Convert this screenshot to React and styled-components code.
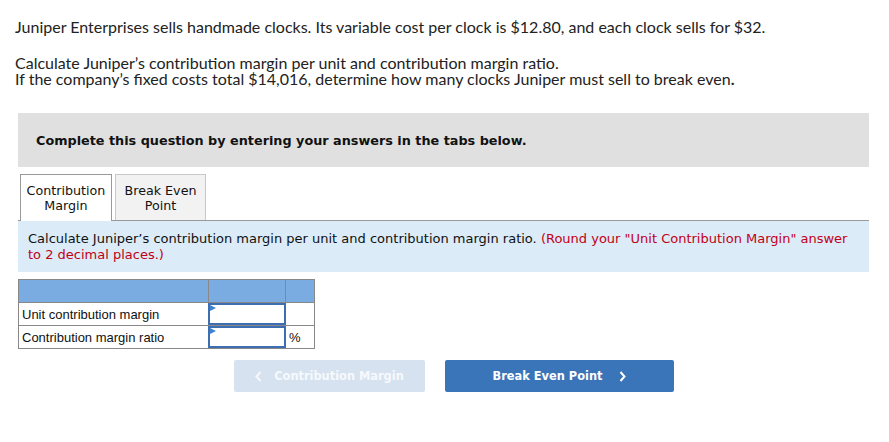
import styled, { createGlobalStyle } from 'styled-components';

const Global = createGlobalStyle`
  body {
    margin: 0;
    background: #ffffff;
    font-family: "Open Sans", "Liberation Sans", sans-serif;
    color: #222;
  }
`;

const Page = styled.div`
  padding: 19px 20px 40px 18px;
  width: 851px;
`;

const Para = styled.p`
  margin: 0 0 0 -3px;
  font-family: "Lato", "Open Sans", sans-serif;
  font-size: 16px;
  line-height: 16px;
  color: #222;
  & + & {
    margin-top: 20px;
  }
`;

const Banner = styled.div`
  margin-top: 26px;
  height: 54px;
  display: flex;
  align-items: center;
  padding-left: 18px;
  background: #e0e0e0;
  font-family: "DejaVu Sans", Verdana, sans-serif;
  font-size: 12.8px;
  font-weight: bold;
  color: #111;
`;

const TabBar = styled.div`
  display: flex;
  gap: 3px;
  margin-top: 7px;
  padding-left: 2px;
  border-bottom: 1px solid #999;
`;

const Tab = styled.div`
  width: ${p => (p.$active ? 92 : 91)}px;
  height: ${p => (p.$active ? 47 : 46)}px;
  box-sizing: border-box;
  border: 1px solid ${p => (p.$active ? '#999' : '#c8c8c8')};
  border-bottom: none;
  background: ${p => (p.$active ? '#ffffff' : '#f2f2f2')};
  margin-bottom: ${p => (p.$active ? '-1px' : '0')};
  display: flex;
  align-items: center;
  justify-content: center;
  text-align: center;
  font-family: "DejaVu Sans", Verdana, sans-serif;
  font-size: 12.7px;
  line-height: 15px;
  color: #111;
`;

const Info = styled.div`
  background: #dbebf8;
  padding: 10px 10px 9px 10px;
  height: 51px;
  box-sizing: border-box;
  font-family: "DejaVu Sans", Verdana, sans-serif;
  font-size: 13px;
  line-height: 16px;
  color: #111;
`;

const Note = styled.span`
  color: #c20016;
`;

const Grid = styled.table`
  margin-top: 7px;
  border-collapse: collapse;
  font-family: "Liberation Sans", Arial, sans-serif;
  font-size: 13px;
  color: #111;
  td {
    border: 1px solid #888;
    padding: 0;
    height: 22px;
  }
`;

const HeadCell = styled.td`
  background: #7aace2;
  width: ${p => p.$w}px;
`;

const Label = styled.td`
  padding-left: 3px !important;
`;

const Entry = styled.td`
  position: relative;
`;

const Field = styled.div`
  height: 22px;
  box-sizing: border-box;
  border: 2px solid #3d6eb2;
  margin: 0 -1px;
  position: relative;
  &::before {
    content: '';
    position: absolute;
    top: 0;
    left: 0;
    border-left: 6px solid #3d82d0;
    border-top: 3px solid transparent;
    border-bottom: 3px solid transparent;
  }
`;

const Unit = styled.td`
  padding-left: 3px !important;
`;

const Nav = styled.div`
  display: flex;
  gap: 20px;
  margin: 11px 0 0 216px;
`;

const NavButton = styled.button`
  width: ${p => p.$w}px;
  height: 32px;
  border: none;
  border-radius: 2px;
  background: ${p => (p.$disabled ? '#d6e2f0' : '#3a75b9')};
  color: ${p => (p.$disabled ? '#f6f9fc' : '#ffffff')};
  font-family: "DejaVu Sans", Verdana, sans-serif;
  font-size: 11.4px;
  font-weight: bold;
  display: flex;
  align-items: center;
  justify-content: center;
  gap: ${p => (p.$disabled ? 12 : 17)}px;
  padding: 0;
`;

const Chevron = ({ dir }) => (
  <svg width="7" height="11" viewBox="0 0 7 11">
    <path
      d={dir === 'left' ? 'M5.5 1 L1.5 5.5 L5.5 10' : 'M1.5 1 L5.5 5.5 L1.5 10'}
      fill="none"
      stroke="currentColor"
      strokeWidth="2"
    />
  </svg>
);

export default function App() {
  return (
    <>
      <Global />
      <Page>
        <Para>
          Juniper Enterprises sells handmade clocks. Its variable cost per clock is $12.80, and each clock sells for $32.
        </Para>
        <Para>
          Calculate Juniper’s contribution margin per unit and contribution margin ratio.
          <br />
          If the company’s fixed costs total $14,016, determine how many clocks Juniper must sell to break even<b>.</b>
        </Para>

        <Banner>Complete this question by entering your answers in the tabs below.</Banner>

        <TabBar>
          <Tab $active>
            Contribution
            <br />
            Margin
          </Tab>
          <Tab>
            Break Even
            <br />
            Point
          </Tab>
        </TabBar>

        <Info>
          Calculate Juniper’s contribution margin per unit and contribution margin ratio.{' '}
          <Note>(Round your "Unit Contribution Margin" answer to 2 decimal places.)</Note>
        </Info>

        <Grid>
          <tbody>
            <tr>
              <HeadCell $w={189} />
              <HeadCell $w={76} />
              <HeadCell $w={28} />
            </tr>
            <tr>
              <Label>Unit contribution margin</Label>
              <Entry>
                <Field />
              </Entry>
              <Unit />
            </tr>
            <tr>
              <Label>Contribution margin ratio</Label>
              <Entry>
                <Field />
              </Entry>
              <Unit>%</Unit>
            </tr>
          </tbody>
        </Grid>

        <Nav>
          <NavButton $w={191} $disabled>
            <Chevron dir="left" />
            Contribution Margin
          </NavButton>
          <NavButton $w={229}>
            Break Even Point
            <Chevron dir="right" />
          </NavButton>
        </Nav>
      </Page>
    </>
  );
}
